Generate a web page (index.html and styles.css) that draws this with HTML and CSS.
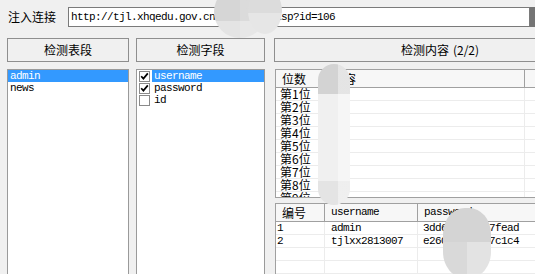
FILE: index.html
```html
<!DOCTYPE html>
<html lang="zh-CN">

<head>
    <meta charset="UTF-8">
    <title>注入检测</title>
    <link rel="stylesheet" href="styles.css">
</head>

<body>
    <div class="app">
        <div class="top-bar">
            <label class="url-label">注入连接</label>
            <div class="url-box mono">http://tjl.xhqedu.gov.cn/shownews.asp?id=106</div>
            <div class="url-drop"></div>
        </div>

        <div class="main">
            <!-- tables -->
            <div class="col col-tables-list">
                <div class="btn">检测表段</div>
                <div class="list mono">
                    <div class="list-row sel">admin</div>
                    <div class="list-row">news</div>
                </div>
            </div>

            <!-- fields -->
            <div class="col col-fields">
                <div class="btn">检测字段</div>
                <div class="list mono">
                    <div class="check-row">
                        <span class="check"><svg viewBox="0 0 9 9" width="9" height="9"><path d="M1.2 4.2 L3.4 6.6 L7.8 1.4" fill="none" stroke="#000" stroke-width="1.7"/></svg></span>
                        <span class="check-label sel">username</span>
                    </div>
                    <div class="check-row">
                        <span class="check"><svg viewBox="0 0 9 9" width="9" height="9"><path d="M1.2 4.2 L3.4 6.6 L7.8 1.4" fill="none" stroke="#000" stroke-width="1.7"/></svg></span>
                        <span class="check-label">password</span>
                    </div>
                    <div class="check-row">
                        <span class="check"></span>
                        <span class="check-label">id</span>
                    </div>
                </div>
            </div>

            <!-- content -->
            <div class="col col-content">
                <div class="btn">检测内容 <span class="count">(2/2)</span></div>

                <div class="grid grid-bits">
                    <div class="grid-head">
                        <div class="cell c-bit">位数</div>
                        <div class="cell c-text">内容</div>
                        <div class="cell c-rest"></div>
                    </div>
                    <div class="grid-row"><div class="cell c-bit">第1位</div><div class="cell c-text"></div><div class="cell c-rest"></div></div>
                    <div class="grid-row"><div class="cell c-bit">第2位</div><div class="cell c-text"></div><div class="cell c-rest"></div></div>
                    <div class="grid-row"><div class="cell c-bit">第3位</div><div class="cell c-text"></div><div class="cell c-rest"></div></div>
                    <div class="grid-row"><div class="cell c-bit">第4位</div><div class="cell c-text"></div><div class="cell c-rest"></div></div>
                    <div class="grid-row"><div class="cell c-bit">第5位</div><div class="cell c-text"></div><div class="cell c-rest"></div></div>
                    <div class="grid-row"><div class="cell c-bit">第6位</div><div class="cell c-text"></div><div class="cell c-rest"></div></div>
                    <div class="grid-row"><div class="cell c-bit">第7位</div><div class="cell c-text"></div><div class="cell c-rest"></div></div>
                    <div class="grid-row"><div class="cell c-bit">第8位</div><div class="cell c-text"></div><div class="cell c-rest"></div></div>
                    <div class="grid-row"><div class="cell c-bit">第9位</div><div class="cell c-text"></div><div class="cell c-rest"></div></div>
                </div>

                <div class="grid grid-data">
                    <div class="grid-head">
                        <div class="cell c-no">编号</div>
                        <div class="cell c-user mono">username</div>
                        <div class="cell c-pass mono">password</div>
                    </div>
                    <div class="grid-row mono"><div class="cell c-no">1</div><div class="cell c-user">admin</div><div class="cell c-pass">3dd6a8e2b917fead</div></div>
                    <div class="grid-row mono"><div class="cell c-no">2</div><div class="cell c-user">tjlxx2813007</div><div class="cell c-pass">e2604d0cf357c1c4</div></div>
                    <div class="grid-row"><div class="cell c-no"></div><div class="cell c-user"></div><div class="cell c-pass"></div></div>
                    <div class="grid-row"><div class="cell c-no"></div><div class="cell c-user"></div><div class="cell c-pass"></div></div>
                </div>
            </div>
        </div>
    </div>

    <!-- mosaic masks over the screenshot -->
    <div class="mask mask-a1"></div>
    <div class="mask mask-a2"></div>
    <div class="mask mask-b"></div>
    <div class="mask mask-c"></div>
</body>

</html>
```

FILE: styles.css
```css
* {
    box-sizing: border-box;
}

body {
    margin: 0;
    width: 535px;
    height: 274px;
    overflow: hidden;
    position: relative;
    background: #f0f0f0;
    color: #000;
    font-family: "Noto Sans CJK SC", "Liberation Sans", sans-serif;
    font-size: 12px;
}

.app {
    width: 535px;
    height: 274px;
    overflow: hidden;
}

.mono {
    font-family: "Liberation Mono", "DejaVu Sans Mono", monospace;
    font-size: 11px;
    letter-spacing: -0.6px;
}

/* url bar */
.top-bar {
    display: flex;
    align-items: center;
    height: 20px;
    margin-top: 7px;
    padding-left: 8px;
}

.url-label {
    width: 60px;
    flex-shrink: 0;
    line-height: 20px;
}

.url-box {
    width: 462px;
    height: 20px;
    flex-shrink: 0;
    border: 1px solid #7a7a7a;
    background: #fff;
    padding-left: 2px;
    line-height: 18px;
    white-space: nowrap;
    overflow: hidden;
}

.url-drop {
    width: 5px;
    height: 20px;
    flex-shrink: 0;
    background: #747474;
}

/* columns */
.main {
    display: flex;
    margin-top: 11px;
    padding-left: 7px;
    height: 236px;
}

.col {
    display: flex;
    flex-direction: column;
    flex-shrink: 0;
}

.col-tables-list {
    width: 122px;
}

.col-fields {
    width: 129px;
    margin-left: 7px;
}

.col-content {
    width: 261px;
    margin-left: 9px;
}

.btn {
    height: 24px;
    flex-shrink: 0;
    width: 332px;
    border: 1px solid #8e8e8e;
    background: #f0f0f0;
    display: flex;
    align-items: center;
    justify-content: center;
    line-height: 14px;
}

.col-tables-list .btn,
.col-fields .btn {
    width: auto;
}

.btn .count {
    margin-left: 4px;
}

.list {
    flex: 1;
    margin-top: 7px;
    background: #fff;
    border: 1px solid #9a9a9a;
    border-bottom: none;
}

.list-row {
    height: 12px;
    line-height: 12px;
    padding-left: 2px;
}

.sel {
    background: #3399ff;
    color: #fff;
}

.check-row {
    display: flex;
    align-items: center;
    height: 12px;
    padding-left: 2px;
}

.check {
    width: 11px;
    height: 11px;
    flex-shrink: 0;
    border: 1px solid #8a8a8a;
    background: #fff;
    margin-right: 2px;
    display: flex;
    align-items: center;
    justify-content: center;
}

.check svg {
    display: block;
}

.check-label {
    flex: 1;
    height: 12px;
    line-height: 12px;
    padding-left: 2px;
}

/* result grids */
.grid {
    margin-left: 1px;
    width: 330px;
    background: #fff;
    border: 1px solid #a0a0a0;
    border-right: none;
    overflow: hidden;
}

.grid-bits {
    margin-top: 7px;
    height: 129px;
    flex-shrink: 0;
}

.grid-data {
    margin-top: 5px;
    flex: 1;
    border-bottom: none;
}

.grid-head {
    display: flex;
    height: 18px;
    background: #f7f7f7;
    border-bottom: 1px solid #a0a0a0;
}

.grid-head .cell {
    border-right: 1px solid #a0a0a0;
    padding-left: 6px;
    line-height: 17px;
}

.grid-row {
    display: flex;
    height: 13px;
    border-bottom: 1px solid #ececec;
}

.grid-row .cell {
    border-right: 1px solid #ececec;
    line-height: 12px;
    white-space: nowrap;
}

.cell {
    flex-shrink: 0;
}

.c-bit {
    width: 50px;
}

.grid-row .c-bit {
    padding-left: 4px;
}

.c-text {
    width: 199px;
}

.grid-head .c-text {
    margin-right: 1px;
}

.c-rest {
    width: 80px;
}

.c-no {
    width: 49px;
}

.grid-row .c-no {
    padding-left: 1px;
}

.c-user {
    width: 93px;
    padding-left: 6px;
}

.c-pass {
    width: 120px;
    padding-left: 5px;
}

/* masks */
.mask {
    position: absolute;
}

.mask-a1 {
    left: 214px;
    top: -14px;
    width: 52px;
    height: 52px;
    border-radius: 50%;
    background: linear-gradient(to right, transparent 50%, rgba(255, 255, 255, 0.12) 50%),
        linear-gradient(to bottom, #d6d6d6 0 68%, #e4e4e4 68%);
}

.mask-a2 {
    left: 248px;
    top: -12px;
    width: 34px;
    height: 46px;
    border-radius: 50%;
    background: linear-gradient(to bottom, #dcdcdc 0 55%, #e6e6e6 55%);
}

.mask-b {
    left: 318px;
    top: 64px;
    width: 32px;
    height: 141px;
    border-radius: 16px;
    background: linear-gradient(to right, transparent 62%, rgba(255, 255, 255, 0.4) 62%),
        linear-gradient(to bottom, #d3d3d3 0 21%, #f0f0f0 21% 83%, #e4e4e4 83%);
}

.mask-c {
    left: 443px;
    top: 208px;
    width: 48px;
    height: 70px;
    border-radius: 22px / 26px;
    background: linear-gradient(to bottom, #d4d4d4 0 48%, transparent 48%),
        linear-gradient(to right, #d9d9d9 50%, #e3e3e3 50%);
}
```
